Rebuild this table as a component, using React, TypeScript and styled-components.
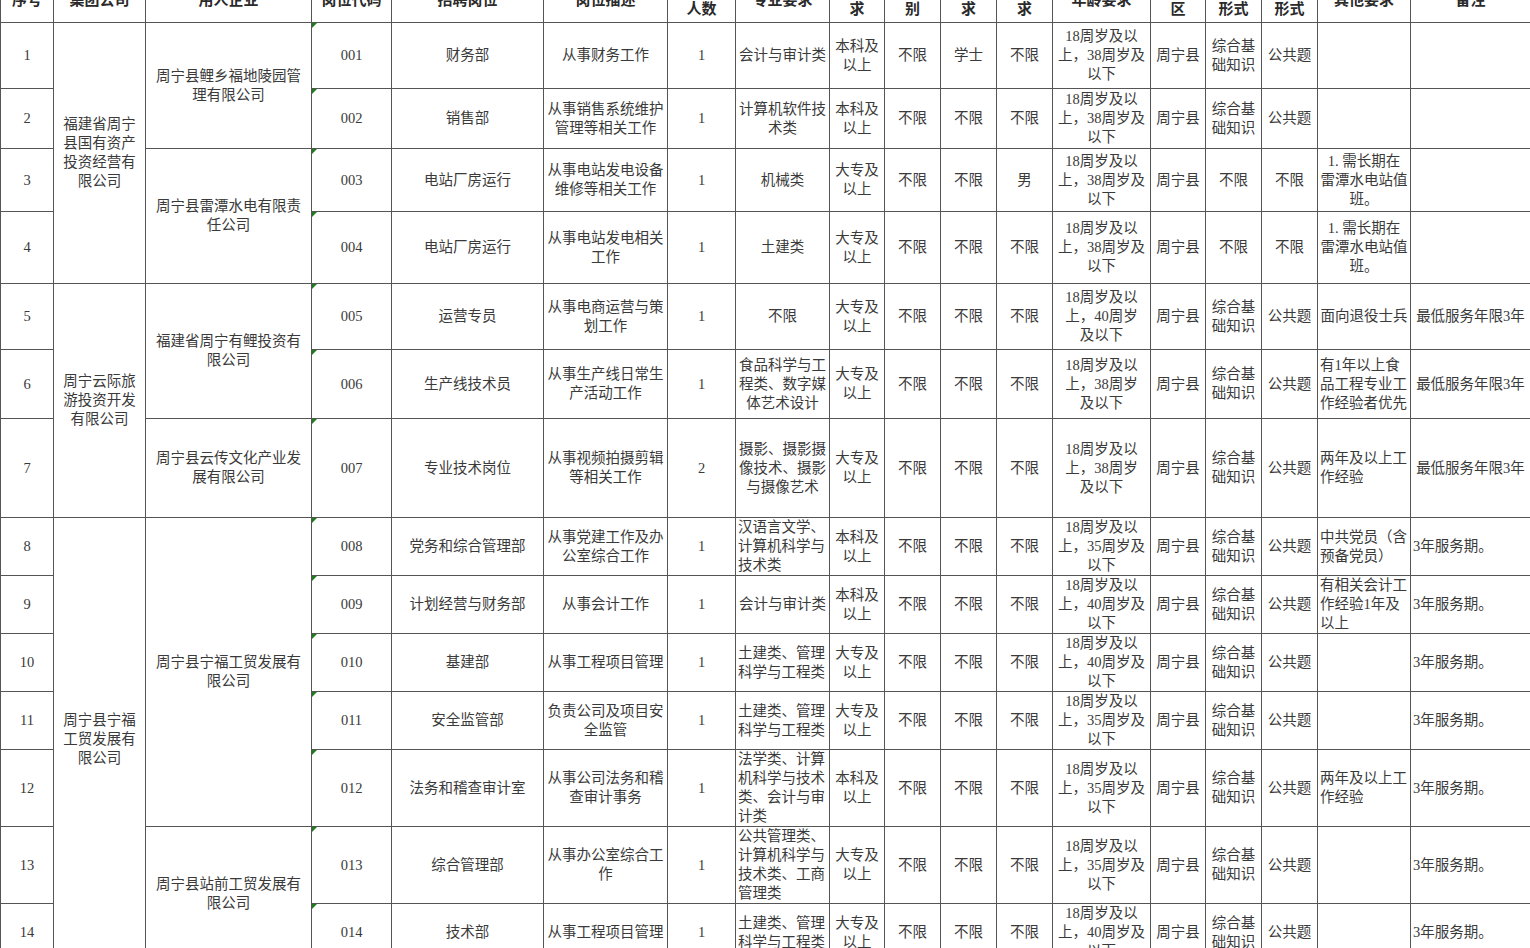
import React from 'react';
import styled, { createGlobalStyle } from 'styled-components';

const GlobalStyle = createGlobalStyle`
  html, body {
    margin: 0;
    padding: 0;
    background: #ffffff;
  }
  body {
    font-family: "Liberation Serif", "Noto Sans CJK SC", serif;
  }
`;

const Viewport = styled.div`
  width: 1530px;
  height: 948px;
  overflow: hidden;
  background: #ffffff;
`;

// the sheet is scrolled so that only the lower half of the header shows
const Sheet = styled.table`
  margin-top: -23px;
  width: 1530px;
  table-layout: fixed;
  border-collapse: collapse;
  color: #3a3a3a;
  font-size: 14.5px;
  line-height: 19px;
`;

const HeadCell = styled.th`
  height: 44px;
  padding: 0 2px;
  border: 1px solid #555;
  font-weight: 700;
  font-size: 15px;
  color: #2a2a2a;
  text-align: center;
  vertical-align: middle;
  white-space: pre-line;
  overflow: hidden;
`;

const Cell = styled.td<{ $align?: 'left' | 'center' }>`
  padding: 0 2px;
  border: 1px solid #555;
  text-align: ${({ $align }) => $align ?? 'center'};
  vertical-align: middle;
  white-space: pre-line;
  overflow: hidden;
`;

const CodeCell = styled(Cell)`
  position: relative;
  border-left-color: #777;
`;

const TextFlag = styled.span`
  position: absolute;
  top: 0;
  left: 0;
  width: 0;
  height: 0;
  border-top: 5px solid #1e7b1e;
  border-right: 5px solid transparent;
`;

const widths = [53, 92, 166, 80, 152, 124, 68, 94, 55, 56, 56, 56, 98, 55, 56, 56, 93, 120];

const headers = [
  '序号', '集团公司', '用人企业', '岗位代码', '招聘岗位', '岗位描述', '招聘\n人数', '专业要求',
  '学历要\n求', '户籍类\n别', '学位要\n求', '性别要\n求', '年龄要求', '工作地\n区',
  '笔试\n形式', '面试\n形式', '其他要求', '备注',
];

type Align = 'left' | 'center';

interface Span {
  text: string;
  rows: number;
}

interface Job {
  h: number;
  group?: Span;
  company?: Span;
  code: string;
  post: string;
  desc: string;
  count: string;
  major: string;
  majorAlign?: Align;
  edu: string;
  degree?: string;
  gender?: string;
  age: string;
  written?: string;
  interview?: string;
  other?: string;
  otherAlign?: Align;
  note?: string;
  noteAlign?: Align;
}

const age38 = '18周岁及以\n上，38周岁及\n以下';
const age40 = '18周岁及以\n上，40周岁及\n以下';
const age35 = '18周岁及以\n上，35周岁及\n以下';
const bachelor = '本科及\n以上';
const college = '大专及\n以上';
const civil = '土建类、管理\n科学与工程类';

const jobs: Job[] = [
  {
    h: 66,
    group: { text: '福建省周宁\n县国有资产\n投资经营有\n限公司', rows: 4 },
    company: { text: '周宁县鲤乡福地陵园管\n理有限公司', rows: 2 },
    code: '001', post: '财务部', desc: '从事财务工作', count: '1',
    major: '会计与审计类', edu: bachelor, degree: '学士', age: age38,
  },
  {
    h: 60, code: '002', post: '销售部', desc: '从事销售系统维护\n管理等相关工作', count: '1',
    major: '计算机软件技\n术类', edu: bachelor, age: age38,
  },
  {
    h: 63,
    company: { text: '周宁县雷潭水电有限责\n任公司', rows: 2 },
    code: '003', post: '电站厂房运行', desc: '从事电站发电设备\n维修等相关工作', count: '1',
    major: '机械类', edu: college, gender: '男', age: age38, written: '不限', interview: '不限',
    other: '1. 需长期在\n雷潭水电站值\n班。',
  },
  {
    h: 72, code: '004', post: '电站厂房运行', desc: '从事电站发电相关\n工作', count: '1',
    major: '土建类', edu: college, age: age38, written: '不限', interview: '不限',
    other: '1. 需长期在\n雷潭水电站值\n班。',
  },
  {
    h: 66,
    group: { text: '周宁云际旅\n游投资开发\n有限公司', rows: 3 },
    company: { text: '福建省周宁有鲤投资有\n限公司', rows: 2 },
    code: '005', post: '运营专员', desc: '从事电商运营与策\n划工作', count: '1',
    major: '不限', edu: college, age: '18周岁及以\n上，40周岁\n及以下',
    other: '面向退役士兵', note: '最低服务年限3年',
  },
  {
    h: 69, code: '006', post: '生产线技术员', desc: '从事生产线日常生\n产活动工作', count: '1',
    major: '食品科学与工\n程类、数字媒\n体艺术设计', edu: college, age: '18周岁及以\n上，38周岁\n及以下',
    other: '有1年以上食\n品工程专业工\n作经验者优先', otherAlign: 'left', note: '最低服务年限3年',
  },
  {
    h: 99,
    company: { text: '周宁县云传文化产业发\n展有限公司', rows: 1 },
    code: '007', post: '专业技术岗位', desc: '从事视频拍摄剪辑\n等相关工作', count: '2',
    major: '摄影、摄影摄\n像技术、摄影\n与摄像艺术', edu: college, age: '18周岁及以\n上，38周岁\n及以下',
    other: '两年及以上工\n作经验', otherAlign: 'left', note: '最低服务年限3年',
  },
  {
    h: 58,
    group: { text: '周宁县宁福\n工贸发展有\n限公司', rows: 7 },
    company: { text: '周宁县宁福工贸发展有\n限公司', rows: 5 },
    code: '008', post: '党务和综合管理部', desc: '从事党建工作及办\n公室综合工作', count: '1',
    major: '汉语言文学、\n计算机科学与\n技术类', majorAlign: 'left', edu: bachelor, age: age35,
    other: '中共党员（含\n预备党员）', otherAlign: 'left', note: '3年服务期。', noteAlign: 'left',
  },
  {
    h: 58, code: '009', post: '计划经营与财务部', desc: '从事会计工作', count: '1',
    major: '会计与审计类', edu: bachelor, age: age40,
    other: '有相关会计工\n作经验1年及\n以上', otherAlign: 'left', note: '3年服务期。', noteAlign: 'left',
  },
  {
    h: 58, code: '010', post: '基建部', desc: '从事工程项目管理', count: '1',
    major: civil, majorAlign: 'left', edu: college, age: age40,
    note: '3年服务期。', noteAlign: 'left',
  },
  {
    h: 58, code: '011', post: '安全监管部', desc: '负责公司及项目安\n全监管', count: '1',
    major: civil, majorAlign: 'left', edu: college, age: age35,
    note: '3年服务期。', noteAlign: 'left',
  },
  {
    h: 77, code: '012', post: '法务和稽查审计室', desc: '从事公司法务和稽\n查审计事务', count: '1',
    major: '法学类、计算\n机科学与技术\n类、会计与审\n计类', majorAlign: 'left', edu: bachelor, age: age35,
    other: '两年及以上工\n作经验', otherAlign: 'left', note: '3年服务期。', noteAlign: 'left',
  },
  {
    h: 76,
    company: { text: '周宁县站前工贸发展有\n限公司', rows: 2 },
    code: '013', post: '综合管理部', desc: '从事办公室综合工\n作', count: '1',
    major: '公共管理类、\n计算机科学与\n技术类、工商\n管理类', majorAlign: 'left', edu: college, age: age35,
    note: '3年服务期。', noteAlign: 'left',
  },
  {
    h: 58, code: '014', post: '技术部', desc: '从事工程项目管理', count: '1',
    major: civil, majorAlign: 'left', edu: college, age: age40,
    note: '3年服务期。', noteAlign: 'left',
  },
];

export default function App() {
  return (
    <Viewport>
      <GlobalStyle />
      <Sheet>
        <colgroup>
          {widths.map((w, i) => (
            <col key={i} style={{ width: w }} />
          ))}
        </colgroup>
        <thead>
          <tr>
            {headers.map((h) => (
              <HeadCell key={h}>{h}</HeadCell>
            ))}
          </tr>
        </thead>
        <tbody>
          {jobs.map((job, i) => (
            <tr key={job.code} style={{ height: job.h }}>
              <Cell>{i + 1}</Cell>
              {job.group && <Cell rowSpan={job.group.rows}>{job.group.text}</Cell>}
              {job.company && <Cell rowSpan={job.company.rows}>{job.company.text}</Cell>}
              <CodeCell>
                <TextFlag />
                {job.code}
              </CodeCell>
              <Cell>{job.post}</Cell>
              <Cell>{job.desc}</Cell>
              <Cell>{job.count}</Cell>
              <Cell $align={job.majorAlign}>{job.major}</Cell>
              <Cell>{job.edu}</Cell>
              <Cell>不限</Cell>
              <Cell>{job.degree ?? '不限'}</Cell>
              <Cell>{job.gender ?? '不限'}</Cell>
              <Cell>{job.age}</Cell>
              <Cell>周宁县</Cell>
              <Cell>{job.written ?? '综合基\n础知识'}</Cell>
              <Cell>{job.interview ?? '公共题'}</Cell>
              <Cell $align={job.otherAlign}>{job.other ?? ''}</Cell>
              <Cell $align={job.noteAlign}>{job.note ?? ''}</Cell>
            </tr>
          ))}
        </tbody>
      </Sheet>
    </Viewport>
  );
}
